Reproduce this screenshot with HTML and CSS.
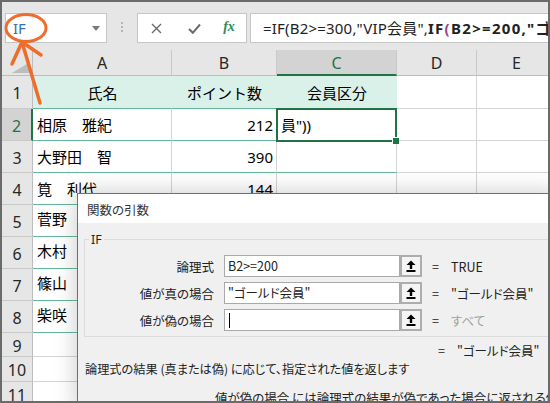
FILE: index.html
```html
<!DOCTYPE html>
<html lang="ja">
<head>
<meta charset="utf-8">
<title>関数の引数</title>
<link rel="stylesheet" href="styles.css">
</head>
<body>
<div class="screen">
  <div class="toolbar">
    <div class="namebox"><span class="name">IF</span><span class="caret"></span></div>
    <div class="grip"><i></i><i></i><i></i></div>
    <div class="fbtns">
      <span class="fb fb-x"><svg width="11" height="11" viewBox="0 0 11 11"><path d="M1 1 L10 10 M10 1 L1 10" stroke="#6a6a6a" stroke-width="1.4" fill="none"/></svg></span>
      <span class="fb fb-ok"><svg width="13" height="11" viewBox="0 0 13 11"><path d="M1 6 L4.8 9.8 L12 1.5" stroke="#6a6a6a" stroke-width="2" fill="none"/></svg></span>
      <span class="fb fb-fx">fx</span>
    </div>
    <div class="formula">=IF(B2&gt;=300,"VIP会員",<b>IF<span class="p2">(</span>B2&gt;=200,"ゴールド会員","すべて"))</b></div>
  </div>

  <div class="sheet">
    <div class="corner"><span class="tri"></span></div>
    <div class="ch">A</div>
    <div class="ch">B</div>
    <div class="ch ch-sel">C</div>
    <div class="ch">D</div>
    <div class="ch">E</div>

    <div class="rh">1</div>
    <div class="c hd center">氏名</div>
    <div class="c hd center">ポイント数</div>
    <div class="c hd center">会員区分</div>
    <div class="c"></div>
    <div class="c"></div>

    <div class="rh rh-sel">2</div>
    <div class="c tb">相原　雅紀</div>
    <div class="c tb num">212</div>
    <div class="c tb active">員"))</div>
    <div class="c"></div>
    <div class="c"></div>

    <div class="rh">3</div>
    <div class="c tb">大野田　智</div>
    <div class="c tb num">390</div>
    <div class="c tb"></div>
    <div class="c"></div>
    <div class="c"></div>

    <div class="rh">4</div>
    <div class="c tb">筧　利代</div>
    <div class="c tb num">144</div>
    <div class="c tb"></div>
    <div class="c"></div>
    <div class="c"></div>

    <div class="rh">5</div>
    <div class="c tb up">菅野</div>
    <div class="c tb"></div>
    <div class="c tb"></div>
    <div class="c"></div>
    <div class="c"></div>

    <div class="rh">6</div>
    <div class="c tb up">木村</div>
    <div class="c tb"></div>
    <div class="c tb"></div>
    <div class="c"></div>
    <div class="c"></div>

    <div class="rh">7</div>
    <div class="c tb up">篠山</div>
    <div class="c tb"></div>
    <div class="c tb"></div>
    <div class="c"></div>
    <div class="c"></div>

    <div class="rh">8</div>
    <div class="c tb up">柴咲</div>
    <div class="c tb"></div>
    <div class="c tb"></div>
    <div class="c"></div>
    <div class="c"></div>

    <div class="rh">9</div>
    <div class="c"></div><div class="c"></div><div class="c"></div><div class="c"></div><div class="c"></div>
    <div class="rh">10</div>
    <div class="c"></div><div class="c"></div><div class="c"></div><div class="c"></div><div class="c"></div>
    <div class="rh">11</div>
    <div class="c"></div><div class="c"></div><div class="c"></div><div class="c"></div><div class="c"></div>
  </div>

  <div class="dialog">
    <div class="dlg-title">関数の引数</div>
    <div class="dlg-body">
      <div class="group">
        <span class="legend">IF</span>
        <div class="args">
          <div class="lbl">論理式</div>
          <div class="inp">B2&gt;=200</div>
          <div class="btn"><svg width="10" height="12" viewBox="0 0 10 12"><path d="M5 0.5 L9.5 5 H6.2 V9 H3.8 V5 H0.5 Z" fill="#000"/><rect x="0.5" y="10" width="9" height="2" fill="#000"/></svg></div>
          <div class="eq">=</div>
          <div class="val">TRUE</div>

          <div class="lbl">値が真の場合</div>
          <div class="inp">"ゴールド会員"</div>
          <div class="btn"><svg width="10" height="12" viewBox="0 0 10 12"><path d="M5 0.5 L9.5 5 H6.2 V9 H3.8 V5 H0.5 Z" fill="#000"/><rect x="0.5" y="10" width="9" height="2" fill="#000"/></svg></div>
          <div class="eq">=</div>
          <div class="val">"ゴールド会員"</div>

          <div class="lbl">値が偽の場合</div>
          <div class="inp"><span class="cursor"></span></div>
          <div class="btn"><svg width="10" height="12" viewBox="0 0 10 12"><path d="M5 0.5 L9.5 5 H6.2 V9 H3.8 V5 H0.5 Z" fill="#000"/><rect x="0.5" y="10" width="9" height="2" fill="#000"/></svg></div>
          <div class="eq">=</div>
          <div class="val muted">すべて</div>
        </div>
      </div>
      <div class="result"><span class="req">=</span><span>"ゴールド会員"</span></div>
      <div class="desc">論理式の結果 (真または偽) に応じて、指定された値を返します</div>
      <div class="argdesc">値が偽の場合 には論理式の結果が偽であった場合に返される値を指定します。</div>
    </div>
  </div>

  <svg class="annot" width="120" height="120" viewBox="0 0 120 120">
    <ellipse cx="26" cy="28" rx="20" ry="13.5" fill="none" stroke="#ef6d2c" stroke-width="3"/>
    <path d="M40 103 L22 42 M22 42 L12 64 M22 42 L41 55" fill="none" stroke="#ef6d2c" stroke-width="3.5" stroke-linecap="round" stroke-linejoin="round"/>
  </svg>
</div>
</body>
</html>
```

FILE: styles.css
```css
* { box-sizing: border-box; }
html, body { margin: 0; padding: 0; }
body {
  background: #fff;
  font-family: "Noto Sans", "Noto Sans CJK JP", sans-serif;
  color: #000;
}
.screen {
  position: relative;
  width: 550px;
  height: 403px;
  border: 2px solid #6b6b6b;
  overflow: hidden;
  background: #fff;
}

/* toolbar */
.toolbar {
  height: 48px;
  background: #e6e6e6;
  display: flex;
  align-items: flex-start;
  padding: 11px 0 0 3px;
}
.namebox {
  width: 102px;
  height: 30px;
  background: #fff;
  border: 1px solid #c6c6c6;
  display: flex;
  align-items: center;
  padding-left: 7px;
  flex: none;
}
.name { font-size: 15px; color: #3a6ea5; }
.caret {
  margin-left: auto;
  margin-right: 6px;
  width: 0; height: 0;
  border-left: 4px solid transparent;
  border-right: 4px solid transparent;
  border-top: 5px solid #7a7a7a;
}
.grip {
  flex: none;
  width: 2px;
  margin: 9px 14px 0 14px;
  display: flex;
  flex-direction: column;
  gap: 2px;
}
.grip i { display: block; width: 2px; height: 2px; background: #b5b5b5; }
.fbtns {
  flex: none;
  width: 110px;
  height: 30px;
  background: #fff;
  border: 1px solid #c6c6c6;
  display: flex;
  align-items: center;
}
.fb { display: flex; justify-content: center; align-items: center; height: 100%; }
.fb-x { width: 36px; }
.fb-ok { width: 40px; }
.fb-fx {
  width: 30px;
  font-family: "Liberation Serif", serif;
  font-style: italic;
  font-weight: bold;
  font-size: 14px;
  color: #2e8b57;
  padding-bottom: 2px;
}
.formula {
  flex: 1;
  margin-left: 3px;
  height: 30px;
  background: #fff;
  border: 1px solid #c6c6c6;
  border-right: none;
  padding-left: 12px;
  font-size: 15px;
  letter-spacing: 0.2px;
  line-height: 28px;
  white-space: nowrap;
  overflow: hidden;
  color: #222;
}
.formula b { font-weight: bold; letter-spacing: 1.3px; }
.p2 { color: #9b3f8c; }

/* sheet */
.sheet {
  display: grid;
  grid-template-columns: 31px 139px 105px 120px 80px 80px;
  grid-template-rows: 26px 33px repeat(7, 32px) 24px 25px 25px;
  font-size: 15px;
}
.corner {
  background: #e6e6e6;
  border-right: 1px solid #bdbdbd;
  border-bottom: 1px solid #bdbdbd;
  position: relative;
}
.tri {
  position: absolute;
  right: 2px;
  bottom: 2px;
  width: 0; height: 0;
  border-left: 18px solid transparent;
  border-bottom: 11px solid #bdbdbd;
}
.ch {
  background: #e6e6e6;
  border-right: 1px solid #c9c9c9;
  border-bottom: 1px solid #bdbdbd;
  display: flex;
  align-items: center;
  justify-content: center;
  font-size: 16px;
  color: #262626;
  padding-top: 1px;
}
.ch-sel {
  background: #d3d3d3;
  color: #217346;
  border-bottom: 2px solid #217346;
}
.rh {
  background: #e6e6e6;
  border-right: 1px solid #bdbdbd;
  border-bottom: 1px solid #c9c9c9;
  display: flex;
  align-items: center;
  justify-content: center;
  font-size: 16px;
  color: #262626;
  padding-top: 2px;
}
.rh-sel {
  background: #d3d3d3;
  color: #217346;
  border-right: 2px solid #217346;
}
.c {
  border-right: 1px solid #d4d4d4;
  border-bottom: 1px solid #d4d4d4;
  display: flex;
  align-items: center;
  padding: 0 3px 0 4px;
  white-space: nowrap;
  overflow: hidden;
  font-family: "Noto Sans", "Noto Sans CJK JP", sans-serif;
}
.hd {
  background: #d9f1e9;
  border-right-color: #d9f1e9;
  border-bottom-color: #63b89b;
}
.tb { border-bottom-color: #63b89b; }
.center { justify-content: center; }
.num { justify-content: flex-end; }
.up { padding-bottom: 4px; }
.active {
  position: relative;
  overflow: visible;
  z-index: 2;
}
.active::before {
  content: "";
  position: absolute;
  left: -1px; top: -1px; right: -1px; bottom: -2px;
  border: 2px solid #217346;
}
.active::after {
  content: "";
  position: absolute;
  right: -3px; bottom: -4px;
  width: 6px; height: 6px;
  background: #217346;
  border-left: 1px solid #fff;
  border-top: 1px solid #fff;
}

/* dialog */
.dialog {
  position: absolute;
  left: 75px;
  top: 191px;
  width: 480px;
  height: 220px;
  border: 1px solid #707070;
  background: #f0f0f0;
  box-shadow: 0 0 22px rgba(0, 0, 0, 0.22);
  font-family: "Noto Sans CJK JP", sans-serif;
  font-feature-settings: "palt";
  font-size: 12.5px;
  color: #222;
  z-index: 5;
}
.dlg-title {
  height: 29px;
  background: #fff;
  padding: 2px 0 0 9px;
  line-height: 27px;
  color: #333;
}
.dlg-body { padding: 16px 0 0 6px; }
.group {
  border: 1px solid #dcdcdc;
  padding: 0 0 5px 0;
}
.legend {
  display: block;
  width: fit-content;
  height: 16px;
  margin: -8px 0 0 4px;
  padding: 0 2px;
  line-height: 16px;
  background: #f0f0f0;
  font-family: "Noto Sans", sans-serif;
}
.args {
  display: grid;
  grid-template-columns: 139px 176px 22px 27px 1fr;
  grid-auto-rows: 22px;
  row-gap: 5px;
  align-items: center;
  margin-top: 7px;
}
.lbl { text-align: right; padding-right: 10px; }
.inp {
  height: 22px;
  background: #fff;
  border: 1px solid #a9a9a9;
  padding-left: 3px;
  line-height: 20px;
  white-space: nowrap;
  display: flex;
  align-items: center;
}
.cursor { display: block; width: 1px; height: 15px; background: #000; margin-left: 1px; }
.btn {
  height: 22px;
  border: 2px solid #adadad;
  background: #f4f4f4;
  display: flex;
  align-items: center;
  justify-content: center;
}
.eq { padding-left: 10px; }
.val { padding-left: 2px; white-space: nowrap; }
.muted { color: #a0a0a0; }
.result {
  display: flex;
  margin: 6px 0 0 354px;
  line-height: 16px;
  white-space: nowrap;
}
.req { width: 19px; }
.desc {
  margin-top: 2px;
  padding-left: 1px;
  line-height: 16px;
  font-size: 12.2px;
  white-space: nowrap;
}
.argdesc {
  margin-top: 13px;
  padding-left: 131px;
  line-height: 16px;
  white-space: nowrap;
}

/* annotation */
.annot {
  position: absolute;
  left: -2px;
  top: -2px;
  z-index: 10;
}
```
